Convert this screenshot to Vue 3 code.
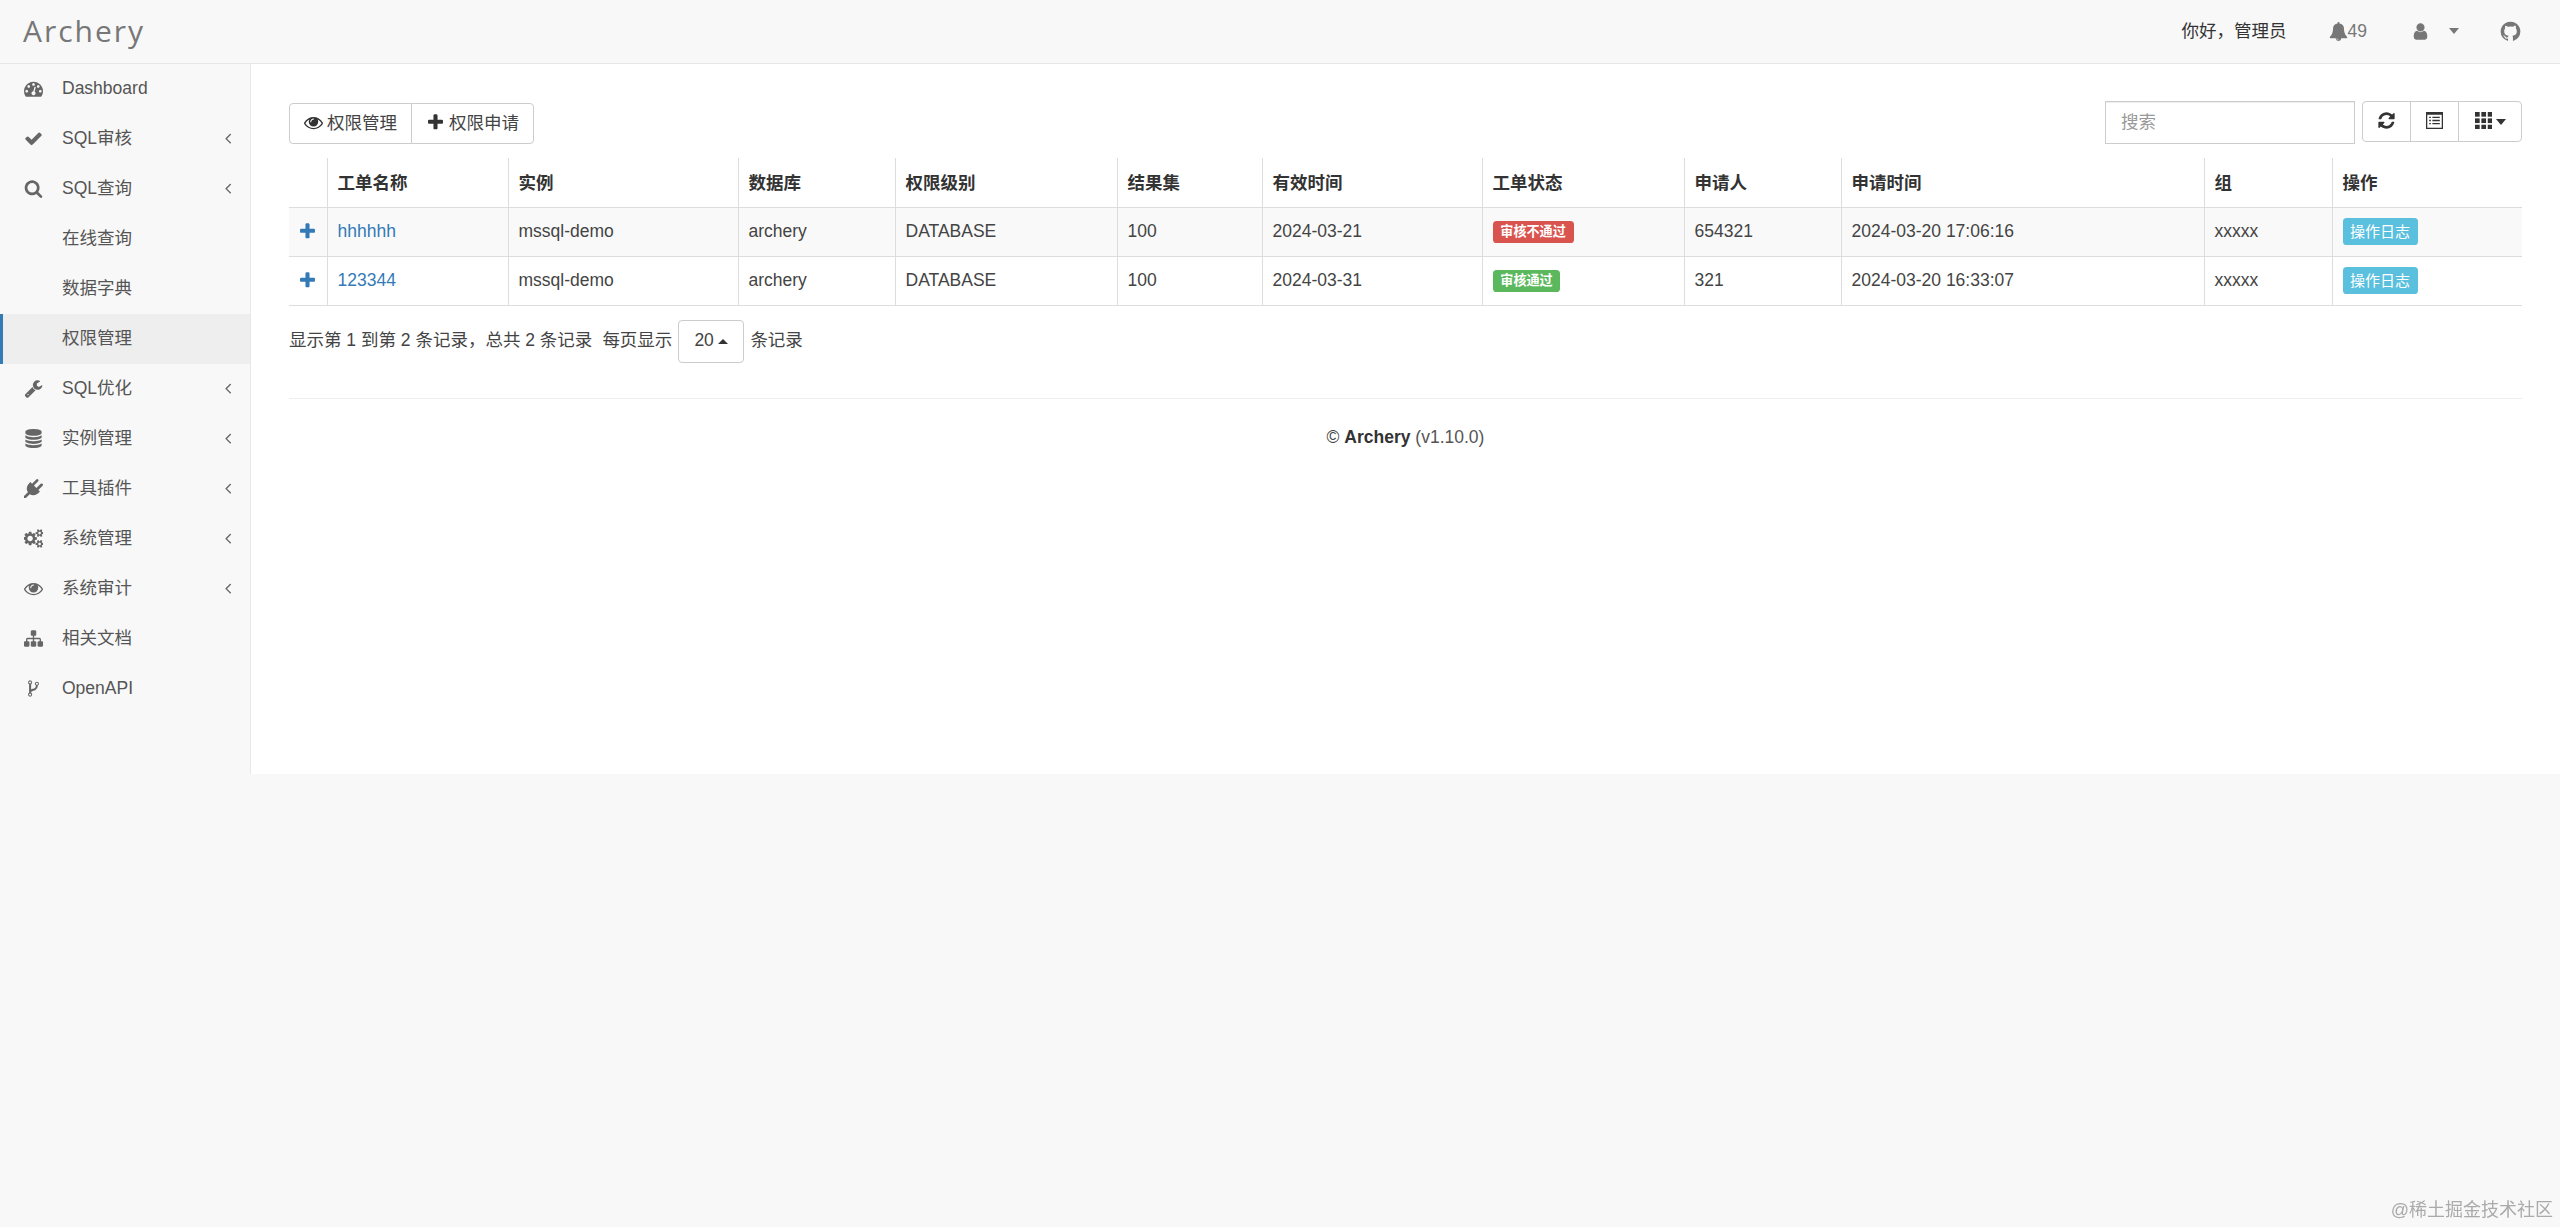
<script setup>
const icons = {
  dashboard: 'M384 1152q0-53-37.5-90.5t-90.5-37.5-90.5 37.5-37.5 90.5 37.5 90.5 90.5 37.5 90.5-37.5 37.5-90.5zm192-448q0-53-37.5-90.5t-90.5-37.5-90.5 37.5-37.5 90.5 37.5 90.5 90.5 37.5 90.5-37.5 37.5-90.5zm428 481l101-382q6-26-7.5-48.5t-38.5-29.5-48 6.5-30 39.5l-101 382q-60 5-107 43.5t-63 98.5q-20 77 20 146t117 89 146-20 89-117q16-60-6-117t-72-91zm660-33q0-53-37.5-90.5t-90.5-37.5-90.5 37.5-37.5 90.5 37.5 90.5 90.5 37.5 90.5-37.5 37.5-90.5zm-640-640q0-53-37.5-90.5t-90.5-37.5-90.5 37.5-37.5 90.5 37.5 90.5 90.5 37.5 90.5-37.5 37.5-90.5zm448 192q0-53-37.5-90.5t-90.5-37.5-90.5 37.5-37.5 90.5 37.5 90.5 90.5 37.5 90.5-37.5 37.5-90.5zm320 448q0 261-141 483-19 29-54 29h-1402q-35 0-54-29-141-221-141-483 0-182 71-348t191-286 286-191 348-71 348 71 286 191 191 286 71 348z',
  check: 'M1671 566q0 40-28 68l-724 724-136 136q-28 28-68 28t-68-28l-136-136-362-362q-28-28-28-68t28-68l136-136q28-28 68-28t68 28l294 295 656-657q28-28 68-28t68 28l136 136q28 28 28 68z',
  search: 'M1216 832q0-185-131.5-316.5t-316.5-131.5-316.5 131.5-131.5 316.5 131.5 316.5 316.5 131.5 316.5-131.5 131.5-316.5zm512 832q0 52-38 90t-90 38q-54 0-90-38l-343-342q-179 124-399 124-143 0-273.5-55.5t-225-150-150-225-55.5-273.5 55.5-273.5 150-225 225-150 273.5-55.5 273.5 55.5 225 150 150 225 55.5 273.5q0 220-124 399l343 343q37 37 37 90z',
  wrench: 'M448 1472q0-26-19-45t-45-19-45 19-19 45 19 45 45 19 45-19 19-45zm644-420l-682 682q-37 37-90 37-52 0-91-37l-106-108q-38-36-38-90 0-53 38-91l681-681q39 98 114.5 173.5t173.5 114.5zm634-435q0 39-23 106-47 134-164.5 217.5t-258.5 83.5q-185 0-316.5-131.5t-131.5-316.5 131.5-316.5 316.5-131.5q58 0 121.5 16.5t107.5 46.5q16 11 16 28t-16 28l-293 169v224l193 107q5-3 79-48.5t135.5-81 70.5-35.5q15 0 23.5 10t8.5 25z',
  database: 'M896 768q237 0 443-43t325-127v170q0 69-103 128t-280 93.5-385 34.5-385-34.5-280-93.5-103-128v-170q119 84 325 127t443 43zm0 768q237 0 443-43t325-127v170q0 69-103 128t-280 93.5-385 34.5-385-34.5-280-93.5-103-128v-170q119 84 325 127t443 43zm0-384q237 0 443-43t325-127v170q0 69-103 128t-280 93.5-385 34.5-385-34.5-280-93.5-103-128v-170q119 84 325 127t443 43zm0-1152q208 0 385 34.5t280 93.5 103 128v128q0 69-103 128t-280 93.5-385 34.5-385-34.5-280-93.5-103-128v-128q0-69 103-128t280-93.5 385-34.5z',
  plug: 'M1755 453q37 38 37 90.5t-37 90.5l-401 400 150 150-160 160q-163 163-389.5 186.5t-411.5-100.5l-362 362h-181v-181l362-362q-124-185-100.5-411.5t186.5-389.5l160-160 150 150 400-401q38-37 91-37t90 37 37 90.5-37 90.5l-400 401 234 234 401-400q38-37 91-37t90 37z',
  gears: 'M832 896q0-106-75-181t-181-75-181 75-75 181 75 181 181 75 181-75 75-181zm768 512q0-52-38-90t-90-38-90 38-38 90q0 53 37.5 90.5t90.5 37.5 90.5-37.5 37.5-90.5zm0-1024q0-52-38-90t-90-38-90 38-38 90q0 53 37.5 90.5t90.5 37.5 90.5-37.5 37.5-90.5zm-384 421v185q0 10-7 19.5t-16 10.5l-155 24q-11 35-32 76 34 48 90 115 7 11 7 20 0 12-7 19-23 30-82.5 89.5t-78.5 59.5q-11 0-21-7l-115-90q-37 19-77 31-11 108-23 155-7 24-30 24h-186q-11 0-20-7.5t-10-17.5l-23-153q-34-10-75-31l-118 89q-7 7-20 7-11 0-21-8-144-133-144-160 0-9 7-19 10-14 41-53t47-61q-23-44-35-82l-152-24q-10-1-17-9.5t-7-19.5v-185q0-10 7-19.5t16-10.5l155-24q11-35 32-76-34-48-90-115-7-11-7-20 0-12 7-20 22-30 82-89t79-59q11 0 21 7l115 90q34-18 77-32 11-108 23-154 7-24 30-24h186q11 0 20 7.5t10 17.5l23 153q34 10 75 31l118-89q8-7 20-7 11 0 21 8 144 133 144 160 0 8-7 19-12 16-42 54t-45 60q23 48 34 82l152 23q10 2 17 10.5t7 19.5zm640 533v140q0 16-149 31-12 27-30 52 51 113 51 138 0 4-4 7-122 71-124 71-8 0-46-47t-52-68q-20 2-30 2t-30-2q-14 21-52 68t-46 47q-2 0-124-71-4-3-4-7 0-25 51-138-18-25-30-52-149-15-149-31v-140q0-16 149-31 13-29 30-52-51-113-51-138 0-4 4-7 4-2 35-20t59-34 30-16q8 0 46 46.5t52 67.5q20-2 30-2t30 2q51-71 92-112l6-2q4 0 124 70 4 3 4 7 0 25-51 138 17 23 30 52 149 15 149 31zm0-1024v140q0 16-149 31-12 27-30 52 51 113 51 138 0 4-4 7-122 71-124 71-8 0-46-47t-52-68q-20 2-30 2t-30-2q-14 21-52 68t-46 47q-2 0-124-71-4-3-4-7 0-25 51-138-18-25-30-52-149-15-149-31v-140q0-16 149-31 13-29 30-52-51-113-51-138 0-4 4-7 4-2 35-20t59-34 30-16q8 0 46 46.5t52 67.5q20-2 30-2t30 2q51-71 92-112l6-2q4 0 124 70 4 3 4 7 0 25-51 138 17 23 30 52 149 15 149 31z',
  eye: 'M1664 960q-152-236-381-353 61 104 61 225 0 185-131.5 316.5t-316.5 131.5-316.5-131.5-131.5-316.5q0-121 61-225-229 117-381 353 133 205 333.5 326.5t434.5 121.5 434.5-121.5 333.5-326.5zm-720-384q0-20-14-34t-34-14q-125 0-214.5 89.5t-89.5 214.5q0 20 14 34t34 14 34-14 14-34q0-86 61-147t147-61q20 0 34-14t14-34zm848 384q0 34-20 69-140 230-376.5 368.5t-499.5 138.5-499.5-139-376.5-368q-20-35-20-69t20-69q140-229 376.5-368t499.5-139 499.5 139 376.5 368q20 35 20 69z',
  sitemap: 'M1792 1248v320q0 40-28 68t-68 28h-320q-40 0-68-28t-28-68v-320q0-40 28-68t68-28h96v-192h-512v192h96q40 0 68 28t28 68v320q0 40-28 68t-68 28h-320q-40 0-68-28t-28-68v-320q0-40 28-68t68-28h96v-192h-512v192h96q40 0 68 28t28 68v320q0 40-28 68t-68 28h-320q-40 0-68-28t-28-68v-320q0-40 28-68t68-28h96v-192q0-52 38-90t90-38h512v-192h-96q-40 0-68-28t-28-68v-320q0-40 28-68t68-28h320q40 0 68 28t28 68v320q0 40-28 68t-68 28h-96v192h512q52 0 90 38t38 90v192h96q40 0 68 28t28 68z',
  fork: 'M672 1472q0-40-28-68t-68-28-68 28-28 68 28 68 68 28 68-28 28-68zm0-1152q0-40-28-68t-68-28-68 28-28 68 28 68 68 28 68-28 28-68zm640 128q0-40-28-68t-68-28-68 28-28 68 28 68 68 28 68-28 28-68zm96 0q0 52-26 96.5t-70 69.5q-2 287-226 414-67 38-203 81-128 40-169.5 71t-41.5 100v26q44 25 70 69.5t26 96.5q0 80-56 136t-136 56-136-56-56-136q0-52 26-96.5t70-69.5v-820q-44-25-70-69.5t-26-96.5q0-80 56-136t136-56 136 56 56 136q0 52-26 96.5t-70 69.5v497q54-26 154-57 55-17 87.5-29.5t70.5-31 59-39.5 40.5-51 28-69.5 8.5-91.5q-44-25-70-69.5t-26-96.5q0-80 56-136t136-56 136 56 56 136z',
  angle: 'M1203 544q0 13-10 23l-393 393 393 393q10 10 10 23t-10 23l-50 50q-10 10-23 10t-23-10l-466-466q-10-10-10-23t10-23l466-466q10-10 23-10t23 10l50 50q10 10 10 23z',
  plus: 'M1600 736v192q0 40-28 68t-68 28h-416v416q0 40-28 68t-68 28h-192q-40 0-68-28t-28-68v-416h-416q-40 0-68-28t-28-68v-192q0-40 28-68t68-28h416v-416q0-40 28-68t68-28h192q40 0 68 28t28 68v416h416q40 0 68 28t28 68z',
  bell: 'M912 1696q0-16-16-16-59 0-101.5-42.5t-42.5-101.5q0-16-16-16t-16 16q0 73 51.5 124.5t124.5 51.5q16 0 16-16zm816-288q0 52-38 90t-90 38h-448q0 106-75 181t-181 75-181-75-75-181h-448q-52 0-90-38t-38-90q50-42 91-88t85-119.5 74.5-158.5 50-206 19.5-260q0-152 117-282.5t307-158.5q-8-19-8-39 0-40 28-68t68-28 68 28 28 68q0 20-8 39 190 28 307 158.5t117 282.5q0 139 19.5 260t50 206 74.5 158.5 85 119.5 91 88z',
  user: 'M1536 1399q0 109-62.5 187t-150.5 78h-854q-88 0-150.5-78t-62.5-187q0-85 8.5-160.5t31.5-152 58.5-131 94-89 134.5-34.5q131 128 313 128t313-128q76 0 134.5 34.5t94 89 58.5 131 31.5 152 8.5 160.5zm-256-887q0 159-112.5 271.5t-271.5 112.5-271.5-112.5-112.5-271.5 112.5-271.5 271.5-112.5 271.5 112.5 112.5 271.5z',
  github: 'M896 128q209 0 385.5 103t279.5 279.5 103 385.5q0 251-146.5 451.5t-378.5 277.5q-27 5-40-7t-13-30q0-3 .5-76.5t.5-134.5q0-97-52-142 57-6 102.5-18t94-39 81-66.5 53-105 20.5-150.5q0-119-79-206 37-91-8-204-28-9-81 11t-92 44l-38 24q-93-26-192-26t-192 26q-16-11-42.5-27t-83.5-38.5-85-13.5q-45 113-8 204-79 87-79 206 0 85 20.5 150t52.5 105 80.5 67 94 39 102.5 18q-39 36-49 103-21 10-45 15t-57 5-65.5-21.5-55.5-62.5q-19-32-48.5-52t-49.5-24l-20-3q-21 0-29 4.5t-5 11.5 9 14 13 12l7 5q22 10 43.5 38t31.5 51l10 23q13 38 44 63t67 32 69.5 3.5 55.5-4.5l23-4q0 38 .5 88.5t.5 54.5q0 18-13 30t-40 7q-232-77-378.5-277.5t-146.5-451.5q0-209 103-385.5t279.5-279.5 385.5-103z',
  refresh: 'M1639 1056q0 5-1 7-64 268-268 434.5t-478 166.5q-146 0-282.5-55t-243.5-157l-129 129q-19 19-45 19t-45-19-19-45v-448q0-26 19-45t45-19h448q26 0 45 19t19 45-19 45l-137 137q71 66 161 102t187 36q134 0 250-65t186-179q11-17 53-117 8-23 30-23h192q13 0 22.5 9.5t9.5 22.5zm25-800v448q0 26-19 45t-45 19h-448q-26 0-45-19t-19-45 19-45l138-138q-148-137-349-137-134 0-250 65t-186 179q-11 17-53 117-8 23-30 23h-199q-13 0-22.5-9.5t-9.5-22.5v-7q65-268 270-434.5t480-166.5q146 0 284 55.5t245 156.5l130-129q19-19 45-19t45 19 19 45z',
}

const menu = [
  { label: 'Dashboard', icon: 'dashboard' },
  { label: 'SQL审核', icon: 'check', arrow: true },
  { label: 'SQL查询', icon: 'search', arrow: true },
  { label: '在线查询' },
  { label: '数据字典' },
  { label: '权限管理', active: true },
  { label: 'SQL优化', icon: 'wrench', arrow: true },
  { label: '实例管理', icon: 'database', arrow: true },
  { label: '工具插件', icon: 'plug', arrow: true },
  { label: '系统管理', icon: 'gears', arrow: true },
  { label: '系统审计', icon: 'eye', arrow: true },
  { label: '相关文档', icon: 'sitemap' },
  { label: 'OpenAPI', icon: 'fork' },
]

const columns = [
  { title: '', width: 38 },
  { title: '工单名称', width: 181 },
  { title: '实例', width: 230 },
  { title: '数据库', width: 157 },
  { title: '权限级别', width: 222 },
  { title: '结果集', width: 145 },
  { title: '有效时间', width: 220 },
  { title: '工单状态', width: 202 },
  { title: '申请人', width: 157 },
  { title: '申请时间', width: 363 },
  { title: '组', width: 128 },
  { title: '操作', width: 190 },
]

const rows = [
  { name: 'hhhhhh', inst: 'mssql-demo', db: 'archery', level: 'DATABASE', limit: 100, until: '2024-03-21', status: '审核不通过', ok: false, user: '654321', time: '2024-03-20 17:06:16', group: 'xxxxx' },
  { name: '123344', inst: 'mssql-demo', db: 'archery', level: 'DATABASE', limit: 100, until: '2024-03-31', status: '审核通过', ok: true, user: '321', time: '2024-03-20 16:33:07', group: 'xxxxx' },
]
</script>

<template>
  <div class="page">
    <header class="navbar">
      <a class="brand">Archery</a>
      <div class="nav-right">
        <span class="hello">你好，管理员</span>
        <span class="bell">
          <svg class="fa" viewBox="0 0 1792 1792"><path :d="icons.bell" /></svg>49
        </span>
        <svg class="fa user" viewBox="0 0 1792 1792"><path :d="icons.user" /></svg>
        <span class="caret nav-caret"></span>
        <svg class="fa github" viewBox="0 0 1792 1792"><path :d="icons.github" /></svg>
      </div>
    </header>

    <div class="wrap">
      <aside class="sidebar">
        <a v-for="item in menu" :key="item.label" class="menu-item" :class="{ active: item.active }">
          <span class="menu-icon">
            <svg v-if="item.icon" class="fa" viewBox="0 0 1792 1792"><path :d="icons[item.icon]" /></svg>
          </span>
          <span class="menu-label">{{ item.label }}</span>
          <svg v-if="item.arrow" class="fa angle" viewBox="0 0 1792 1792"><path :d="icons.angle" /></svg>
        </a>
      </aside>

      <main class="content">
        <div class="toolbar">
          <div class="btn-group">
            <button class="btn">
              <svg class="fa eye" viewBox="0 0 1792 1792"><path :d="icons.eye" /></svg>权限管理
            </button>
            <button class="btn">
              <svg class="fa eye" viewBox="0 0 1792 1792"><path :d="icons.plus" /></svg>权限申请
            </button>
          </div>
          <div class="tools">
            <input class="search" placeholder="搜索" />
            <div class="btn-group">
              <button class="btn tool">
                <svg class="fa" viewBox="0 0 1792 1792"><path :d="icons.refresh" /></svg>
              </button>
              <button class="btn tool">
                <svg class="list-alt" viewBox="0 0 16 16">
                  <rect x="0.6" y="0.6" width="14.8" height="14.8" fill="none" stroke="#333" stroke-width="1.2" />
                  <rect x="0" y="0" width="16" height="2.6" fill="#333" />
                  <path d="M3 5h1.6M3 8h1.6M3 11h1.6M6 5h7M6 8h7M6 11h7" stroke="#333" stroke-width="1.2" />
                </svg>
              </button>
              <button class="btn tool th">
                <svg class="grid" viewBox="0 0 16 16">
                  <template v-for="y in [0, 6, 12]" :key="y">
                    <rect v-for="x in [0, 6, 12]" :key="x" :x="x" :y="y" width="4.4" height="4.4" fill="#333" />
                  </template>
                </svg>
                <span class="caret"></span>
              </button>
            </div>
          </div>
        </div>

        <table class="grid-table">
          <colgroup>
            <col v-for="c in columns" :key="c.title" :style="{ width: c.width + 'px' }" />
          </colgroup>
          <thead>
            <tr>
              <th v-for="c in columns" :key="c.title">{{ c.title }}</th>
            </tr>
          </thead>
          <tbody>
            <tr v-for="r in rows" :key="r.name">
              <td class="detail">
                <svg class="fa" viewBox="0 0 1792 1792"><path :d="icons.plus" /></svg>
              </td>
              <td><a class="link">{{ r.name }}</a></td>
              <td>{{ r.inst }}</td>
              <td>{{ r.db }}</td>
              <td>{{ r.level }}</td>
              <td>{{ r.limit }}</td>
              <td>{{ r.until }}</td>
              <td><span class="label" :class="r.ok ? 'ok' : 'bad'">{{ r.status }}</span></td>
              <td>{{ r.user }}</td>
              <td>{{ r.time }}</td>
              <td>{{ r.group }}</td>
              <td><button class="log">操作日志</button></td>
            </tr>
          </tbody>
        </table>

        <div class="pager">
          <span>显示第 1 到第 2 条记录，总共 2 条记录</span>
          <span class="per-page">每页显示</span>
          <button class="btn size">20<span class="caret up"></span></button>
          <span>条记录</span>
        </div>

        <footer class="footer">
          © <strong>Archery</strong> <span class="ver">(v1.10.0)</span>
        </footer>
      </main>
    </div>

    <div class="watermark">@稀土掘金技术社区</div>
  </div>
</template>

<style>
html, body {
  margin: 0;
  background: #f8f8f8;
}
</style>

<style scoped>
.page {
  font-family: "Liberation Sans", "Noto Sans CJK SC", sans-serif;
  font-size: 17.5px;
  line-height: 1.43;
  color: #444;
  min-height: 1227px;
}
.fa {
  width: 1em;
  height: 1em;
  fill: currentColor;
  display: block;
  flex: none;
}
.navbar {
  height: 63px;
  border-bottom: 1px solid #e7e7e7;
  background: #f8f8f8;
  display: flex;
  align-items: center;
  justify-content: space-between;
  padding: 0 38px 0 23px;
}
.brand {
  font-family: "Open Sans", sans-serif;
  font-size: 30px;
  letter-spacing: 2px;
  color: #777;
}
.nav-right {
  display: flex;
  align-items: center;
}
.hello {
  margin-right: 42px;
  color: #333;
}
.bell {
  display: flex;
  align-items: center;
  color: #777;
  margin-right: 44px;
}
.bell .fa {
  font-size: 19px;
}
.user {
  color: #777;
  font-size: 19px;
}
.caret {
  display: inline-block;
  width: 0;
  height: 0;
  border-top: 6px solid #333;
  border-left: 5px solid transparent;
  border-right: 5px solid transparent;
}
.nav-caret {
  border-top-color: #777;
  margin: 0 40px 0 19px;
}
.github {
  color: #777;
  font-size: 23px;
}
.wrap {
  display: flex;
  height: 710px;
}
.sidebar {
  width: 250px;
  flex: none;
  border-right: 1px solid #e7e7e7;
  background: #f8f8f8;
}
.menu-item {
  height: 50px;
  display: flex;
  align-items: center;
  color: #555;
  padding: 0 13px 0 24px;
  box-sizing: border-box;
}
.menu-item.active {
  background: #eee;
  border-left: 3px solid #337ab7;
  padding-left: 21px;
}
.menu-icon {
  width: 38px;
  flex: none;
  color: #666;
  font-size: 19px;
  margin-top: -2px;
}
.menu-label {
  flex: 1;
}
.angle {
  color: #666;
  font-size: 18px;
  margin-top: -2px;
}
.content {
  flex: 1;
  background: #fff;
  padding: 39px 38px 0;
  min-width: 0;
}
.toolbar {
  display: flex;
  justify-content: space-between;
  align-items: flex-start;
  height: 55px;
}
.tools {
  display: flex;
  gap: 7px;
  margin-top: -2px;
}
.btn-group {
  display: flex;
}
.btn {
  height: 41px;
  box-sizing: border-box;
  background: #fff;
  border: 1px solid #ccc;
  margin-left: -1px;
  padding: 0 14px;
  font: inherit;
  color: #444;
  display: flex;
  align-items: center;
  gap: 4px;
}
.btn .fa {
  margin-top: -2px;
  color: #333;
}
.btn .eye {
  font-size: 19px;
}
.btn-group .btn:first-child {
  margin-left: 0;
  border-radius: 4px 0 0 4px;
}
.btn-group .btn:last-child {
  border-radius: 0 4px 4px 0;
}
.tool {
  width: 49px;
  justify-content: center;
  padding: 0;
}
.tool .fa {
  font-size: 19px;
}
.tool.th {
  width: 64px;
}
.list-alt,
.grid {
  width: 17px;
  height: 17px;
  margin-top: -2px;
}
.search {
  width: 250px;
  height: 43px;
  box-sizing: border-box;
  border: 1px solid #ccc;
  box-shadow: inset 0 1px 1px rgba(0, 0, 0, 0.075);
  padding: 0 15px;
  font: inherit;
  color: #555;
  outline: none;
}
.search::placeholder {
  color: #999;
}
.grid-table {
  width: 2233px;
  table-layout: fixed;
  border-collapse: collapse;
  border-bottom: 1px solid #ddd;
}
.grid-table th {
  height: 49px;
  padding: 2px 10px 0;
  box-sizing: border-box;
  font-weight: 700;
  text-align: left;
  color: #333;
  border-left: 1px solid #ddd;
  border-bottom: 1px solid #ddd;
}
.grid-table td {
  height: 49px;
  padding: 0 10px;
  box-sizing: border-box;
  border-left: 1px solid #ddd;
  border-bottom: 1px solid #ddd;
  white-space: nowrap;
}
.grid-table th:first-child,
.grid-table td:first-child {
  border-left: none;
}
.grid-table tbody tr:first-child {
  background: #f9f9f9;
}
.grid-table td.detail {
  color: #337ab7;
  font-size: 19px;
  padding-left: 9px;
}
.detail .fa {
  margin-top: -1px;
}
.link {
  color: #337ab7;
}
.label {
  display: inline-block;
  font-size: 13.1px;
  font-weight: 700;
  line-height: 22px;
  color: #fff;
  padding: 0 7.8px;
  border-radius: 3.6px;
  vertical-align: middle;
}
.label.bad {
  background: #d9534f;
}
.label.ok {
  background: #5cb85c;
}
.log {
  width: 75px;
  height: 27px;
  border: none;
  border-radius: 3.6px;
  background: #5bc0de;
  color: #fff;
  font: inherit;
  font-size: 15px;
  padding: 0;
  display: block;
}
.pager {
  display: flex;
  align-items: center;
  margin-top: 14px;
  gap: 5px;
}
.per-page {
  margin-left: 5px;
}
.btn.size {
  height: 43px;
  width: 66px;
  border-radius: 4px;
  margin: 0 1px 0 1px;
  padding: 0 15px;
}
.caret.up {
  border-top: none;
  border-bottom: 5px solid #333;
}
.footer {
  margin-top: 35px;
  border-top: 1px solid #eee;
  padding-top: 26px;
  text-align: center;
}
.footer strong {
  color: #333;
}
.ver {
  color: #555;
}
.watermark {
  position: fixed;
  right: 7px;
  bottom: 3px;
  font-size: 18px;
  color: #aaa;
}
</style>
